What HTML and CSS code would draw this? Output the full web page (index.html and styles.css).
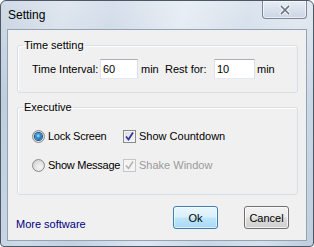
FILE: index.html
```html
<!DOCTYPE html>
<html>
<head>
<meta charset="utf-8">
<link rel="stylesheet" href="styles.css">
</head>
<body>
<div class="window">
  <div class="titlebar">
    <span class="title">Setting</span>
    <span class="close">
      <svg width="12" height="10" viewBox="0 0 12 10">
        <path d="M2.5 1.5 L9.5 8.5 M9.5 1.5 L2.5 8.5" stroke="#f4f6f8" stroke-width="3.6" stroke-linecap="square"/>
        <path d="M2.5 1.5 L9.5 8.5 M9.5 1.5 L2.5 8.5" stroke="#6b7480" stroke-width="1.6" stroke-linecap="square"/>
      </svg>
    </span>
  </div>
  <div class="client">
    <fieldset class="group group-time">
      <legend class="legend">Time setting</legend>
      <div class="time-row">
        <span class="lbl lbl-interval">Time Interval:</span>
        <input class="num num-interval" type="text" value="60">
        <span class="unit unit-first">min</span>
        <span class="lbl lbl-rest">Rest for:</span>
        <input class="num num-rest" type="text" value="10">
        <span class="unit unit-last">min</span>
      </div>
    </fieldset>
    <fieldset class="group group-exec">
      <legend class="legend">Executive</legend>
      <div class="opt-grid">
        <div class="opt"><span class="radio radio-on"><span class="dot"></span></span><span class="opt-text opt-narrow">Lock Screen</span></div>
        <div class="opt"><span class="check"><svg width="11" height="11" viewBox="0 0 11 11"><path d="M2 5.5 L4.5 8.5 L9 1.5" fill="none" stroke="#2c3aa0" stroke-width="1.8"/></svg></span><span class="opt-text">Show Countdown</span></div>
        <div class="opt"><span class="radio"></span><span class="opt-text opt-narrow">Show Message</span></div>
        <div class="opt"><span class="check check-disabled"><svg width="11" height="11" viewBox="0 0 11 11"><path d="M2 5.5 L4.5 8.5 L9 1.5" fill="none" stroke="#b4b4b4" stroke-width="1.6"/></svg></span><span class="opt-text text-disabled">Shake Window</span></div>
      </div>
    </fieldset>
    <div class="footer">
      <a class="link">More software</a>
      <button class="btn btn-default">Ok</button>
      <button class="btn btn-cancel">Cancel</button>
    </div>
  </div>
</div>
</body>
</html>
```
FILE: styles.css
```css
html, body {
  margin: 0;
  padding: 0;
  background: #ffffff;
}
body {
  font-family: "Liberation Sans", Arial, sans-serif;
  font-size: 11px;
  line-height: 13px;
  color: #000;
}
.window {
  width: 314px;
  height: 247px;
  box-sizing: border-box;
  border: 1px solid #4d5866;
  border-radius: 6px 6px 4px 4px;
  background:
    linear-gradient(180deg, rgba(255,255,255,0.35) 0%, rgba(255,255,255,0) 40%),
    linear-gradient(100deg, #b9c8d9 0%, #cfdae7 18%, #c3d1e1 32%, #dde6f0 52%, #cad7e5 70%, #d6e0eb 85%, #bfcddd 100%);
  display: flex;
  flex-direction: column;
  overflow: hidden;
}
.titlebar {
  height: 28px;
  display: flex;
  justify-content: space-between;
  align-items: flex-start;
  padding-left: 7px;
  padding-right: 6px;
}
.title {
  font-size: 12px;
  line-height: 14px;
  margin-top: 7px;
  color: #000;
}
.close {
  width: 45px;
  height: 18px;
  box-sizing: border-box;
  border: 1px solid #7b8899;
  border-top: none;
  border-radius: 0 0 4px 4px;
  background: linear-gradient(180deg, #e6edf5 0%, #d9e2ec 50%, #cbd6e3 100%);
  box-shadow: inset 0 0 0 1px rgba(255,255,255,0.6);
  display: flex;
  align-items: center;
  justify-content: center;
}
.close svg { display: block; margin-top: 1px; }
.client {
  flex: 1;
  margin: 0 6px 5px 6px;
  border: 1px solid #93a3b6;
  background: #f0f0f0;
  display: flex;
  flex-direction: column;
}
.group {
  margin: 0 8px 0 9px;
  padding: 0;
  border: 1px solid #d5dfe5;
  border-radius: 3px;
  min-inline-size: 0;
  box-shadow: inset 1px 1px 0 #ffffff;
}
.group-time { margin-top: 9px; }
.group-exec { margin-top: 8px; }
.legend {
  margin-left: 5px;
  padding: 0 1px;
  line-height: 13px;
}
.time-row {
  display: flex;
  align-items: center;
  height: 20px;
  padding: 7px 0 13px 14px;
  white-space: nowrap;
}
.lbl-interval { width: 68px; }
.num {
  box-sizing: border-box;
  height: 20px;
  margin: 0;
  padding: 0 0 0 2px;
  border: 1px solid;
  border-color: #abadb3 #dbdfe6 #e3e9ef #e2e3ea;
  background: #ffffff;
  font-family: "Liberation Sans", Arial, sans-serif;
  font-size: 11px;
  color: #000;
  outline: none;
}
.num-interval { width: 38px; }
.num-rest { width: 41px; }
.unit-first { margin-left: 3px; width: 24px; }
.lbl-rest { width: 49px; }
.unit-last { margin-left: 2px; }
.opt-grid {
  display: grid;
  grid-template-columns: 91px auto;
  row-gap: 12px;
  padding: 14px 0 20px 14px;
}
.opt {
  display: flex;
  align-items: center;
  height: 17px;
  white-space: nowrap;
}
.opt-text { margin-left: 3px; white-space: nowrap; }
.opt-narrow { letter-spacing: -0.25px; }
.text-disabled { color: #9a9a9a; }
.radio {
  flex: none;
  width: 13px;
  height: 13px;
  box-sizing: border-box;
  border-radius: 50%;
  border: 1px solid #8a8a8a;
  background: radial-gradient(circle at 60% 65%, #f6f6f6 0%, #dcdcdc 60%, #c8c8c8 100%);
  display: flex;
  align-items: center;
  justify-content: center;
}
.dot {
  width: 7px;
  height: 7px;
  border-radius: 50%;
  background: radial-gradient(circle at 45% 40%, #a4e2ff 0%, #2a8fd8 40%, #0d4f8f 100%);
  box-shadow: 0 0 0 1px #1d4f7c;
}
.check {
  flex: none;
  width: 13px;
  height: 13px;
  box-sizing: border-box;
  border: 1px solid #8a8a8a;
  background: linear-gradient(135deg, #dcdcdc 0%, #f6f6f6 100%);
  box-shadow: inset 0 0 0 1px #f4f4f4;
  display: flex;
  align-items: center;
  justify-content: center;
}
.check svg { display: block; }
.check-disabled {
  border-color: #c6c6c6;
  background: #f4f4f4;
}
.footer {
  display: flex;
  align-items: flex-start;
  margin-top: 11px;
  padding: 0 17px 0 8px;
}
.link {
  color: #000080;
  margin-top: 12px;
  margin-right: auto;
  text-decoration: none;
}
.btn {
  width: 45px;
  height: 23px;
  box-sizing: border-box;
  border: 1px solid #707070;
  border-radius: 3px;
  background: linear-gradient(180deg, #f2f2f2 0%, #ebebeb 48%, #dddddd 52%, #cfcfcf 100%);
  box-shadow: inset 0 0 0 1px rgba(255,255,255,0.7);
  font-family: "Liberation Sans", Arial, sans-serif;
  font-size: 11px;
  color: #000;
  padding: 0;
  margin: 0;
}
.btn-default {
  border-color: #3c7fb1;
  background: linear-gradient(180deg, #eaf6fd 0%, #d9f0fc 48%, #bee6fd 52%, #a7d9f5 100%);
  box-shadow: inset 0 0 0 1px rgba(255,255,255,0.55);
}
.btn-cancel { margin-left: 26px; }
```
